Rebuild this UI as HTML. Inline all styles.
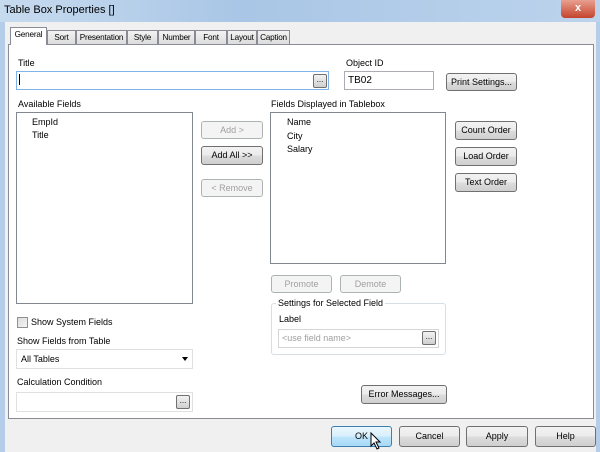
<html><head><style>
body{margin:0;width:600px;height:452px;overflow:hidden;font-family:"Liberation Sans",sans-serif;font-size:9px;color:#000;position:relative;background:#f0f0f0}
.a{position:absolute}
.btn{position:absolute;border:1px solid #707070;border-radius:3px;background:linear-gradient(#f2f2f2,#ebebeb 50%,#dddddd 50%,#cfcfcf);text-align:center;box-sizing:border-box;font-size:9px}
.dis{color:#a0a0a0;border-color:#adb2b5;background:#f4f4f4}
.inp{position:absolute;background:#fff;border:1px solid #abadb3;box-sizing:border-box}
.dot{position:absolute;width:14px;height:14px;border:1px solid #707070;border-radius:2px;background:linear-gradient(#f2f2f2,#d0d0d0);box-sizing:border-box;font-size:8px;text-align:center;line-height:9px}
.tab{position:absolute;top:30px;height:14px;border:1px solid #898c95;border-bottom:none;background:linear-gradient(#f3f3f3,#dcdcdc);box-sizing:border-box;text-align:center;line-height:13px;font-size:8.2px;letter-spacing:-0.2px;white-space:nowrap;overflow:hidden}
</style></head><body>
<div class="a" style="left:0;top:0;width:600px;height:22px;background:linear-gradient(90deg,#c7dbef,#a9c6e6 40%,#bcd3ec)"></div>
<div class="a" style="left:0;top:22px;width:5px;height:430px;background:#b5cde8"></div>
<div class="a" style="left:596px;top:22px;width:4px;height:430px;background:#b5cde8"></div>
<div class="a" style="left:4px;top:4px;font-size:11px">Table Box Properties []</div>
<div class="a" style="left:561px;top:0;width:34px;height:18px;border-radius:0 0 4px 4px;background:linear-gradient(#e8a090,#c4432c);color:#fff;text-align:center;font-weight:bold;font-size:11px;line-height:17px">x</div>
<div class="a" style="left:8px;top:44px;width:586px;height:375px;background:#fff;border:1px solid #898c95;box-sizing:border-box"></div>
<div class="tab" style="left:47px;width:29px">Sort</div>
<div class="tab" style="left:76px;width:51px">Presentation</div>
<div class="tab" style="left:127px;width:31px">Style</div>
<div class="tab" style="left:158px;width:37px">Number</div>
<div class="tab" style="left:195px;width:32px">Font</div>
<div class="tab" style="left:227px;width:30px">Layout</div>
<div class="tab" style="left:257px;width:33px">Caption</div>
<div class="tab" style="left:10px;top:27px;width:37px;height:18px;background:#fff;line-height:13px">General</div>
<div class="a" style="left:18px;top:58px">Title</div>
<div class="inp" style="left:16px;top:71px;width:313px;height:19px;border-color:#7eb4ea"></div>
<div class="a" style="left:19px;top:74px;width:1px;height:11px;background:#000"></div>
<div class="dot" style="left:313px;top:74px">...</div>
<div class="a" style="left:346px;top:58px">Object ID</div>
<div class="inp" style="left:344px;top:71px;width:90px;height:19px;padding:3px 3px;font-size:10px">TB02</div>
<div class="btn" style="left:446px;top:73px;width:71px;height:18px;line-height:16px">Print Settings...</div>
<div class="a" style="left:18px;top:99px">Available Fields</div>
<div class="inp" style="left:16px;top:112px;width:177px;height:192px;border-color:#828790"></div>
<div class="a" style="left:32px;top:117px">EmpId</div>
<div class="a" style="left:32px;top:130px">Title</div>
<div class="btn dis" style="left:201px;top:121px;width:62px;height:18px;line-height:16px">Add &gt;</div>
<div class="btn" style="left:201px;top:146px;width:62px;height:19px;line-height:17px">Add All &gt;&gt;</div>
<div class="btn dis" style="left:201px;top:179px;width:62px;height:18px;line-height:16px">&lt; Remove</div>
<div class="a" style="left:271px;top:99px">Fields Displayed in Tablebox</div>
<div class="inp" style="left:270px;top:112px;width:176px;height:152px;border-color:#828790"></div>
<div class="a" style="left:287px;top:117px">Name</div>
<div class="a" style="left:287px;top:131px">City</div>
<div class="a" style="left:287px;top:144px">Salary</div>
<div class="btn" style="left:455px;top:121px;width:62px;height:19px;line-height:17px">Count Order</div>
<div class="btn" style="left:455px;top:147px;width:62px;height:19px;line-height:17px">Load Order</div>
<div class="btn" style="left:455px;top:173px;width:62px;height:19px;line-height:17px">Text Order</div>
<div class="btn dis" style="left:271px;top:275px;width:61px;height:18px;line-height:16px">Promote</div>
<div class="btn dis" style="left:340px;top:275px;width:61px;height:18px;line-height:16px">Demote</div>
<div class="a" style="left:271px;top:303px;width:175px;height:52px;border:1px solid #d5dfe5;border-radius:3px;box-sizing:border-box"></div>
<div class="a" style="left:276px;top:298px;background:#fff;padding:0 2px">Settings for Selected Field</div>
<div class="a" style="left:279px;top:314px">Label</div>
<div class="inp" style="left:278px;top:329px;width:161px;height:19px;border-color:#d5d5d5;color:#a0a0a0;padding:3px 3px">&lt;use field name&gt;</div>
<div class="dot" style="left:422px;top:331px">...</div>
<div class="a" style="left:17px;top:317px;width:11px;height:11px;border:1px solid #8f8f8f;background:linear-gradient(135deg,#dcdcdc,#f5f5f5);box-sizing:border-box"></div>
<div class="a" style="left:31px;top:317px">Show System Fields</div>
<div class="a" style="left:17px;top:336px">Show Fields from Table</div>
<div class="inp" style="left:16px;top:349px;width:177px;height:20px;border-color:#e0e0e0;padding:4px 4px">All Tables</div>
<div class="a" style="left:182px;top:357px;width:0;height:0;border-left:3px solid transparent;border-right:3px solid transparent;border-top:4px solid #000"></div>
<div class="a" style="left:17px;top:377px">Calculation Condition</div>
<div class="inp" style="left:16px;top:392px;width:177px;height:20px;border-color:#e0e0e0"></div>
<div class="dot" style="left:176px;top:395px">...</div>
<div class="btn" style="left:361px;top:385px;width:86px;height:19px;line-height:17px">Error Messages...</div>
<div class="btn" style="left:331px;top:426px;width:61px;height:21px;line-height:19px;border-color:#3c7fb1;background:linear-gradient(#eaf6fd,#d9f0fc 50%,#bee6fd 50%,#a7d9f5)">OK</div>
<svg class="a" style="left:370px;top:432px" width="12" height="18" viewBox="0 0 12 18"><path d="M1 1v13l3-3 3 6 2-1-3-6h4z" fill="#fff" stroke="#000" stroke-width="1"/></svg>
<div class="btn" style="left:399px;top:426px;width:61px;height:21px;line-height:19px">Cancel</div>
<div class="btn" style="left:466px;top:426px;width:62px;height:21px;line-height:19px">Apply</div>
<div class="btn" style="left:535px;top:426px;width:61px;height:21px;line-height:19px">Help</div>
</body></html>
